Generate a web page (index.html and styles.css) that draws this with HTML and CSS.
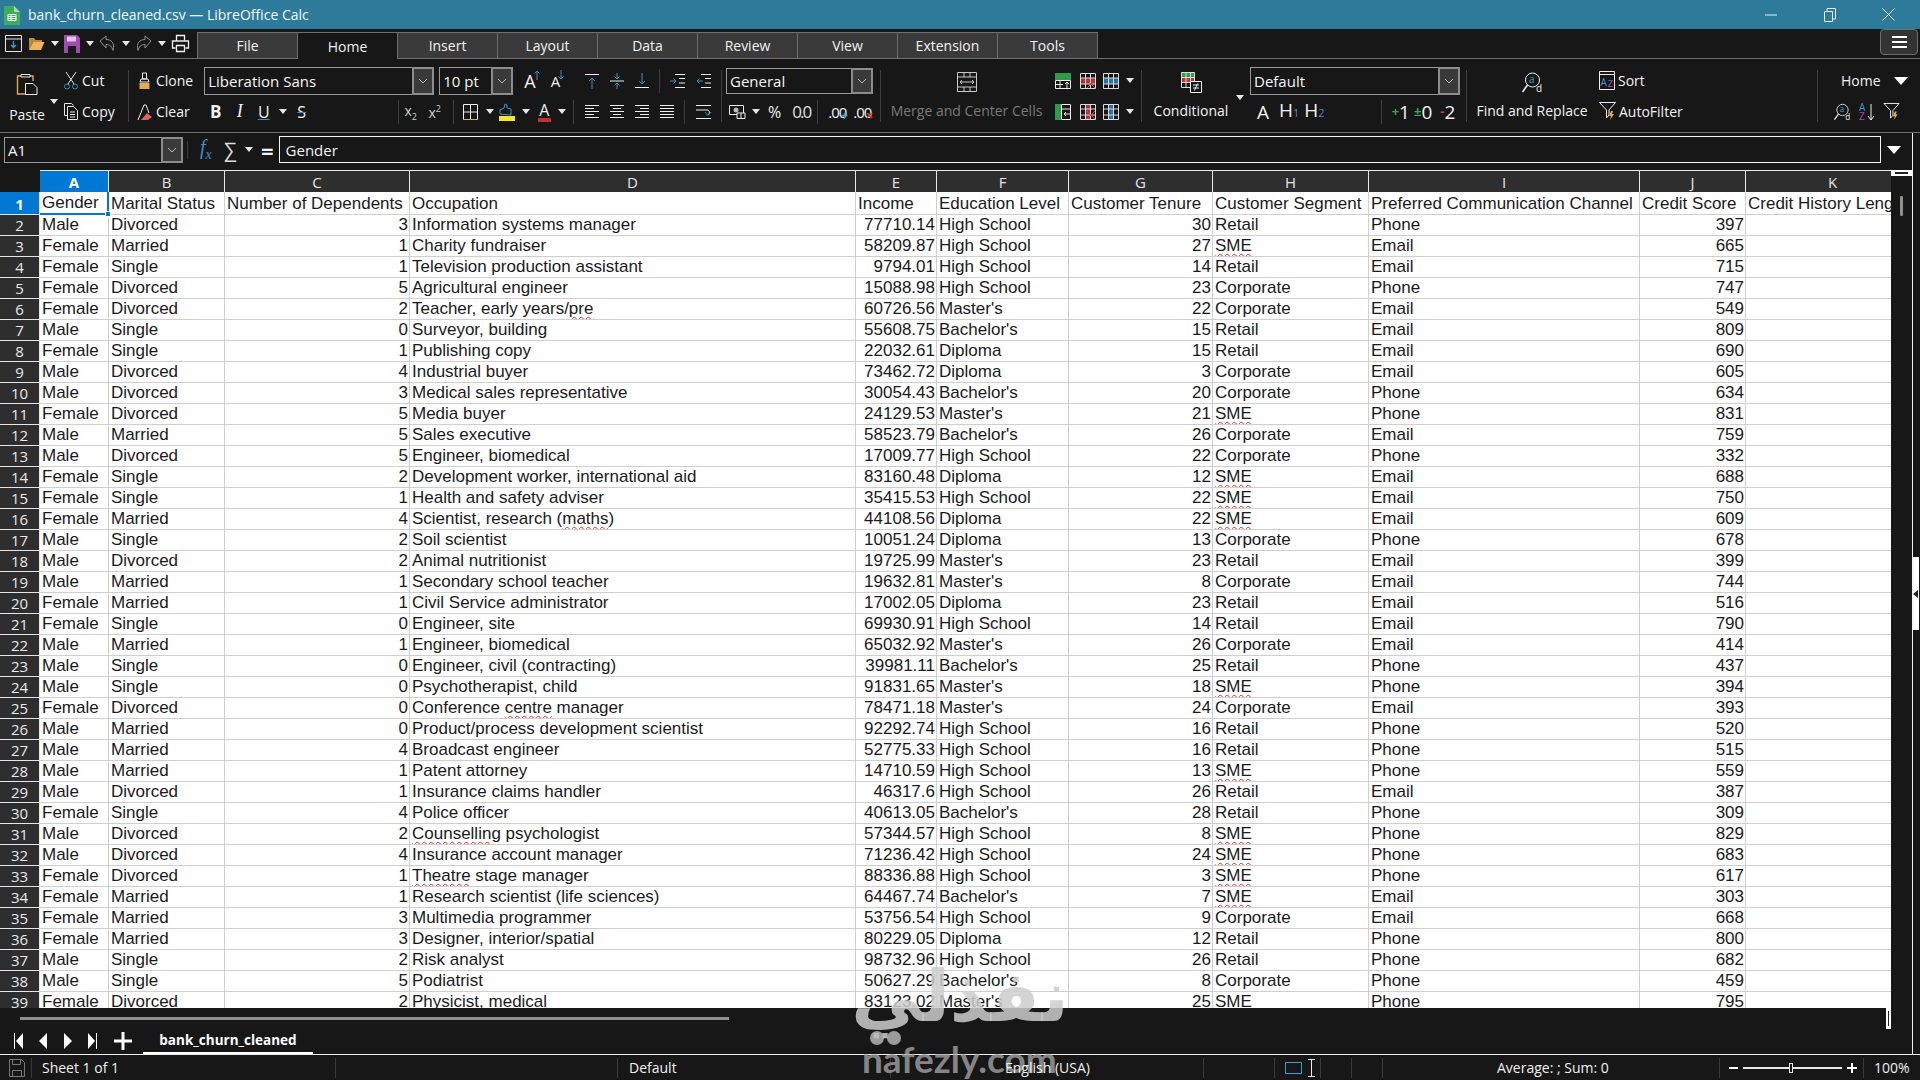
FILE: index.html
```html
<!DOCTYPE html>
<html>
<head>
	<meta charset="utf-8">
	<title>bank_churn_cleaned.csv — LibreOffice Calc</title>
	<link rel="stylesheet" href="styles.css">
</head>
<body>
<div class="app">

	<!-- title bar -->
	<div class="titlebar">
		<svg class="doc-icon" width="16" height="20" viewBox="0 0 16 20"><path d="M0 1h10l6 6v13H0z" fill="#3fae5a"/><path d="M10 1l6 6h-6z" fill="#a6dcb3"/><path d="M4 9.5h8v6H4zM4 11.5h8M4 13.5h8M7 9.5v6" fill="none" stroke="#fff"/></svg>
		<span class="title-text">bank_churn_cleaned.csv — LibreOffice Calc</span>
		<div class="win-btns">
			<div class="win-btn"><svg width="12" height="12" viewBox="0 0 12 12"><path d="M0 6h12" stroke="#e8eef2"/></svg></div>
			<div class="win-btn"><svg width="12" height="14" viewBox="0 0 12 14"><path d="M.5 3.5h8v10h-8zM3 3V.5h8.500V11H9" fill="none" stroke="#e8eef2"/></svg></div>
			<div class="win-btn"><svg width="13" height="13" viewBox="0 0 13 13"><path d="M.5.500l12 12M12.500.500l-12 12" stroke="#e8eef2"/></svg></div>
		</div>
	</div>

	<!-- quick toolbar + tabs -->
	<div class="tabbar">
		<div class="quick">
			<svg width="17" height="17" viewBox="0 0 17 17"><path d="M.5.500h16v16H.5zM.5 4h16" fill="none" stroke="#e6e6e6"/><path d="M8.500 6v6M6 10l2.500 2.500L11 10" fill="none" stroke="#3d9bd6" stroke-width="1.300"/></svg>
			<svg class="ml6" width="17" height="17" viewBox="0 0 17 17"><path d="M1 15V3h5l1.500 2H14v2H5L1 15z" fill="#b98a3e"/><path d="M1 15l4-8h11.500l-3.500 8z" fill="#f2b45a"/></svg>
			<i class="dd ml3"></i>
			<svg class="ml2" width="16" height="18" viewBox="0 0 16 18"><path d="M0 0h13l3 3v15H0z" fill="#a04bb0"/><path d="M3 1.500h9v5H3z" fill="#e4c3ea"/><path d="M4 11h8v7H4z" fill="#1a1a1a"/></svg>
			<i class="dd ml3"></i>
			<svg class="ml2" width="17" height="17" viewBox="0 0 17 17"><path d="M1 6l6-5v3.500c5 0 9 3 7 11-1-4-3-6-7-6V13z" fill="none" stroke="#8f8f8f"/></svg>
			<i class="dd ml3"></i>
			<svg class="ml2" width="17" height="17" viewBox="0 0 17 17"><path d="M16 6l-6-5v3.500c-5 0-9 3-7 11 1-4 3-6 7-6V13z" fill="none" stroke="#8f8f8f"/></svg>
			<i class="dd ml3"></i>
			<svg class="ml3" width="17" height="17" viewBox="0 0 17 17"><path d="M4.500 6V.5h8V6M3.500 13H.5V6h16v7h-3M4.500 10.500h8v6h-8z" fill="none" stroke="#f0f0f0" stroke-width="1.300"/></svg>
		</div>
		<div class="tabs">
			<div class="tab">File</div>
			<div class="tab tab-on">Home</div>
			<div class="tab">Insert</div>
			<div class="tab">Layout</div>
			<div class="tab">Data</div>
			<div class="tab">Review</div>
			<div class="tab">View</div>
			<div class="tab">Extension</div>
			<div class="tab">Tools</div>
		</div>
		<div class="menu-btn"><span></span><span></span><span></span></div>
	</div>

	<!-- ribbon -->
	<div class="ribbon">
		<div class="grp grp-clip">
			<div class="paste">
				<svg width="22" height="22" viewBox="0 0 22 22"><path d="M5 3H1.500v18H9M14 3h3v5" fill="none" stroke="#e9a94f" stroke-width="1.400"/><path d="M5 4V1.500h9V4z" fill="none" stroke="#e8e8e8"/><path d="M9.500 10.500H17l4 4v7H9.500z" fill="#171717" stroke="#f0f0f0"/></svg>
				<span class="lbl">Paste</span>
				<i class="dd paste-dd"></i>
			</div>
			<div class="clip-col">
				<div class="row">
					<svg width="14" height="18" viewBox="0 0 14 18"><path d="M2 0l8 12M12 0L4 12" stroke="#e8e8e8" fill="none"/><circle cx="3" cy="14.500" r="2.500" fill="none" stroke="#3d8fc9"/><circle cx="11" cy="14.500" r="2.500" fill="none" stroke="#3d8fc9"/></svg>
					<span class="lbl ml4">Cut</span>
				</div>
				<div class="row">
					<svg width="14" height="17" viewBox="0 0 14 17"><path d="M3 12.500H.5V.5h7l2 2M3.500 3.500h6l4 4v9h-10zM6 9h5M6 11.500h5M6 14h5" fill="none" stroke="#e8e8e8"/></svg>
					<span class="lbl ml4">Copy</span>
				</div>
			</div>
		</div>
		<div class="grp grp-font">
			<div class="row">
				<svg class="ml9" width="13" height="18" viewBox="0 0 13 18"><path d="M4.500 7V1h4v6zM3 7h7l1 3H2z" fill="none" stroke="#eee"/><path d="M1.500 11h10v6h-10z" fill="#e9a94f"/></svg>
				<span class="lbl ml5">Clone</span>
				<div class="combo combo-font ml11">Liberation Sans<b class="combo-btn"><svg width="10" height="6" viewBox="0 0 10 6"><path d="M1 1l4 4 4-4" fill="none" stroke="#bbb"/></svg></b></div>
				<div class="combo combo-size ml5">10 pt<b class="combo-btn"><svg width="10" height="6" viewBox="0 0 10 6"><path d="M1 1l4 4 4-4" fill="none" stroke="#bbb"/></svg></b></div>
				<span class="big-a ml11">A<svg width="6" height="10" viewBox="0 0 6 10"><path d="M3 10V1M.5 3.500L3 1l2.500 2.500" fill="none" stroke="#3d8fc9"/></svg></span>
				<span class="small-a ml11">A<svg width="6" height="10" viewBox="0 0 6 10"><path d="M3 0v9M.5 6.500L3 9l2.500-2.500" fill="none" stroke="#3d8fc9"/></svg></span>
			</div>
			<div class="row">
				<svg class="ml8" width="16" height="18" viewBox="0 0 16 18"><path d="M1 17L7 2h2l3 8" fill="none" stroke="#eee"/><path d="M4 17l6-7 5 4-4 3z" fill="#e0606a"/></svg>
				<span class="lbl ml3">Clear</span>
				<span class="tb tb-b ml14">B</span>
				<span class="tb tb-i">I</span>
				<span class="tb tb-u">U</span>
				<i class="dd"></i>
				<span class="tb tb-s">S</span>
				<b class="vs ml84"></b>
				<span class="tb tb-x">x<sub>2</sub></span>
				<span class="tb tb-x">x<sup>2</sup></span>
				<b class="vs ml6"></b>
				<svg class="ml9" width="15" height="16" viewBox="0 0 15 16"><path d="M.5.500h14v15H.5zM7.500.5v15M.5 8h14" fill="none" stroke="#eee"/><path d="M.5 15.500h14" stroke="#e9a94f"/></svg>
				<i class="dd ml5"></i>
				<svg class="ml2" width="16" height="18" viewBox="0 0 16 18"><path d="M1 11V7l4-2 1-4 2 1v3l4 1v6z" fill="none" stroke="#3d8fc9"/><path d="M0 13h16v5H0z" fill="#f5e532"/></svg>
				<i class="dd ml4"></i>
				<span class="font-color ml5">A</span>
				<i class="dd ml4"></i>
				<b class="vs ml4"></b>
			</div>
		</div>
		<div class="grp grp-align">
			<div class="row">
				<svg width="14" height="16" viewBox="0 0 14 16"><path d="M0 1.500h14" stroke="#eee"/><path d="M7 16V5M4 8l3-3 3 3" fill="none" stroke="#3d8fc9"/></svg>
				<svg class="ml11" width="14" height="16" viewBox="0 0 14 16"><path d="M0 8h14" stroke="#eee"/><path d="M7 0v6M4.500 3.500L7 6l2.500-2.500M7 16v-6M4.500 12.500L7 10l2.500 2.500" fill="none" stroke="#3d8fc9"/></svg>
				<svg class="ml11" width="14" height="16" viewBox="0 0 14 16"><path d="M0 14.500h14" stroke="#eee"/><path d="M7 0v11M4 8l3 3 3-3" fill="none" stroke="#3d8fc9"/></svg>
				<b class="vs ml10"></b>
				<svg class="ml10" width="15" height="14" viewBox="0 0 15 14"><path d="M5 .5h10M9 4.500h6M9 9h6M5 13.500h10" stroke="#eee"/><path d="M0 7h6M3.500 4.500L6 7 3.500 9.500" fill="none" stroke="#3d8fc9"/></svg>
				<svg class="ml11" width="15" height="14" viewBox="0 0 15 14"><path d="M5 .5h10M9 4.500h6M9 9h6M5 13.500h10" stroke="#eee"/><path d="M7 7H1M3.500 4.500L1 7l2.500 2.500" fill="none" stroke="#3d8fc9"/></svg>
			</div>
			<div class="row">
				<svg width="14" height="14" viewBox="0 0 14 14"><path d="M0 .5h14M0 3.500h9M0 6.500h14M0 9.500h9M0 12.500h14" stroke="#eee"/></svg>
				<svg class="ml11" width="14" height="14" viewBox="0 0 14 14"><path d="M0 .5h14M3 3.500h8M0 6.500h14M3 9.500h8M0 12.500h14" stroke="#eee"/></svg>
				<svg class="ml11" width="14" height="14" viewBox="0 0 14 14"><path d="M0 .5h14M5 3.500h9M0 6.500h14M5 9.500h9M0 12.500h14" stroke="#eee"/></svg>
				<svg class="ml11" width="14" height="14" viewBox="0 0 14 14"><path d="M0 .5h14M0 3.500h14M0 6.500h14M0 9.500h14M0 12.500h14" stroke="#eee"/></svg>
				<b class="vs ml10"></b>
				<svg class="ml11" width="15" height="14" viewBox="0 0 15 14"><path d="M0 .5h15M0 13.500h15M0 5h11c3 0 3 4 1 5" fill="none" stroke="#eee"/><path d="M9 7l3 3.500L15 7" fill="none" stroke="#3d8fc9"/></svg>
			</div>
		</div>
		<b class="vs vs-tall"></b>
		<div class="grp grp-num">
			<div class="row"><div class="combo combo-num ml4">General<b class="combo-btn"><svg width="10" height="6" viewBox="0 0 10 6"><path d="M1 1l4 4 4-4" fill="none" stroke="#bbb"/></svg></b></div></div>
			<div class="row">
				<svg class="ml7" width="17" height="14" viewBox="0 0 17 14"><path d="M.5.500h14v9H.5z" fill="none" stroke="#eee"/><circle cx="7" cy="5" r="2.500" fill="#bbb"/><path d="M8 8h8v5.500H8z" fill="#171717" stroke="#eee"/><path d="M12 8v6" stroke="#eee"/></svg>
				<i class="dd ml3"></i>
				<span class="tb-pct ml5">%</span>
				<span class="tb-num ml11">0.0</span>
				<b class="vs ml9"></b>
				<span class="tb-dec ml10">.00<em class="dec-add">+</em></span>
				<span class="tb-dec ml9">.00<em class="dec-del">×</em></span>
			</div>
		</div>
		<b class="vs vs-tall"></b>
		<div class="grp grp-merge">
			<div class="merge-col">
				<svg width="20" height="20" viewBox="0 0 20 20"><path d="M.5.500h19v19H.5zM.5 5h19M.5 15h19M7 .5V5M13 .5V5M7 15v4.500M13 15v4.500M3 10h14M3 10l2-2M3 10l2 2M17 10l-2-2M17 10l-2 2" fill="none" stroke="#c9c9c9"/></svg>
				<span class="lbl lbl-off">Merge and Center Cells</span>
			</div>
			<div class="cell-ops">
				<div class="row">
					<svg width="16" height="16" viewBox="0 0 16 16"><path d="M0 0h16v7H0z" fill="#2f9a4a"/><path d="M.5 7.500h15v8H.5zM5 7.500v8M.5 11.500H8" fill="none" stroke="#eee"/><path d="M12 15V9M10 11l2-2 2 2" fill="none" stroke="#eee"/></svg>
					<svg class="ml9" width="16" height="16" viewBox="0 0 16 16"><path d="M0 5h16v6H0z" fill="#a93232"/><path d="M.5.500h15v15H.5zM5.500.5v15M10.500.5v15M.5 5h15M.5 11h15" fill="none" stroke="#ddd"/><path d="M7 7l8 8M15 7l-8 8" stroke="#e04040"/></svg>
					<svg class="ml7" width="16" height="16" viewBox="0 0 16 16"><path d="M0 5h16v6H0z" fill="#2a6fa8"/><path d="M.5.500h15v15H.5zM5.500.5v15M10.500.5v15M.5 5h15M.5 11h15" fill="none" stroke="#ddd"/></svg>
					<i class="dd ml4"></i>
				</div>
				<div class="row">
					<svg width="16" height="16" viewBox="0 0 16 16"><path d="M0 0h6v16H0z" fill="#2f9a4a"/><path d="M6.500.5h9v15h-9zM6.500 5h9" fill="none" stroke="#eee"/><path d="M15 10H9M11 8l-2 2 2 2" fill="none" stroke="#eee"/></svg>
					<svg class="ml9" width="16" height="16" viewBox="0 0 16 16"><path d="M5 0h6v16H5z" fill="#a93232"/><path d="M.5.500h15v15H.5zM5.500.5v15M10.500.5v15M.5 5h15M.5 11h15" fill="none" stroke="#ddd"/><path d="M7 7l8 8M15 7l-8 8" stroke="#e04040"/></svg>
					<svg class="ml7" width="16" height="16" viewBox="0 0 16 16"><path d="M5 0h6v16H5z" fill="#2a6fa8"/><path d="M.5.500h15v15H.5zM5.500.5v15M10.500.5v15M.5 5h15M.5 11h15" fill="none" stroke="#ddd"/></svg>
					<i class="dd ml4"></i>
				</div>
			</div>
		</div>
		<b class="vs vs-tall"></b>
		<div class="grp grp-style">
			<div class="cond">
				<svg width="21" height="21" viewBox="0 0 21 21"><path d="M0 0h14v5H0z" fill="#2f9a4a"/><path d="M0 5h14v5H0z" fill="#c0392b"/><path d="M.5.500h13v15H.5zM5 .5v15M9.500.5v15M.5 5.500h13M.5 10.500h13" fill="none" stroke="#ddd"/><path d="M9.500 9.500h11v11h-11z" fill="#171717" stroke="#eee"/><path d="M12 13h6M12 16h6M16.500 11.500l-3 7" fill="none" stroke="#eee"/></svg>
				<span class="lbl">Conditional</span>
				<i class="dd cond-dd"></i>
			</div>
			<div class="style-col">
				<div class="row"><div class="combo combo-style">Default<b class="combo-btn"><svg width="10" height="6" viewBox="0 0 10 6"><path d="M1 1l4 4 4-4" fill="none" stroke="#bbb"/></svg></b></div></div>
				<div class="row">
					<span class="hd ml7">A</span>
					<span class="hd ml10">H<em>1</em></span>
					<span class="hd ml5">H<em>2</em></span>
					<b class="vs ml56"></b>
					<span class="hd ml10"><u class="c-green">+</u>1</span>
					<span class="hd ml4"><u class="c-mix">±</u>0</span>
					<span class="hd ml8"><u class="c-red">-</u>2</span>
				</div>
			</div>
		</div>
		<b class="vs vs-tall"></b>
		<div class="grp grp-find">
			<div class="find-col">
				<svg width="21" height="21" viewBox="0 0 21 21"><circle cx="10.500" cy="8" r="7" fill="none" stroke="#eee"/><path d="M5.500 13L.5 20" stroke="#eee" stroke-width="1.500"/><text x="7" y="11" class="ico-a">a</text><text x="14" y="20" class="ico-d">d</text></svg>
				<span class="lbl">Find and Replace</span>
			</div>
			<div class="sort-col">
				<div class="row">
					<svg width="16" height="19" viewBox="0 0 16 19"><path d="M.5.500h15v18H.5zM.5 3.500h15" fill="none" stroke="#eee"/><text x="1.500" y="15" class="ico-az1">A</text><text x="8.500" y="16" class="ico-az2">z</text></svg>
					<span class="lbl ml3">Sort</span>
				</div>
				<div class="row">
					<svg width="17" height="19" viewBox="0 0 17 19"><path d="M.5.500h16L10 8v5L7.500 16V8z" fill="none" stroke="#eee"/><path d="M12 9l-2 5h2l-1 4 4-6h-2l1-3z" fill="#e9a94f"/></svg>
					<span class="lbl ml3">AutoFilter</span>
				</div>
			</div>
		</div>
		<b class="vs vs-tall"></b>
		<div class="grp grp-home">
			<div class="row"><span class="lbl ml23">Home</span><i class="dd-big"></i></div>
			<div class="row">
				<svg class="ml16" width="17" height="18" viewBox="0 0 21 21"><circle cx="10.500" cy="8" r="7" fill="none" stroke="#eee"/><path d="M5.500 13L.5 20" stroke="#eee" stroke-width="1.500"/><text x="7" y="11" class="ico-a">a</text><text x="14" y="20" class="ico-d">d</text></svg>
				<svg class="ml8" width="17" height="18" viewBox="0 0 17 18"><text x="0" y="8" class="ico-az3">A</text><text x="0" y="17" class="ico-az4">Z</text><path d="M12 1v16M9 13l3 4 3-4" fill="none" stroke="#eee"/></svg>
				<svg class="ml7" width="17" height="18" viewBox="0 0 17 19"><path d="M.5.500h16L10 8v5L7.500 16V8z" fill="none" stroke="#eee"/><path d="M12 9l-2 5h2l-1 4 4-6h-2l1-3z" fill="#e9a94f"/></svg>
			</div>
		</div>
	</div>

	<div class="work">
		<div class="main">

			<!-- formula bar -->
			<div class="formula">
				<div class="combo combo-name">A1<b class="combo-btn"><svg width="10" height="6" viewBox="0 0 10 6"><path d="M1 1l4 4 4-4" fill="none" stroke="#bbb"/></svg></b></div>
				<b class="vs-short"></b>
				<span class="fx">f<sub>x</sub></span>
				<span class="sigma">∑</span>
				<i class="dd"></i>
				<span class="equal">=</span>
				<div class="f-input">Gender</div>
				<i class="dd-big"></i>
			</div>

			<div class="sheet-wrap">
				<div class="sheet">
					<table class="grid">
						<colgroup><col class="w40"><col class="w69"><col class="w116"><col class="w185"><col class="w446"><col class="w81"><col class="w132"><col class="w144"><col class="w156"><col class="w271"><col class="w106"><col class="w174"></colgroup>
						<thead>
							<tr><th class="corner"></th><th class="on">A</th><th>B</th><th>C</th><th>D</th><th>E</th><th>F</th><th>G</th><th>H</th><th>I</th><th>J</th><th>K</th></tr>
						</thead>
						<tbody>
							<tr class="first"><th class="on">1</th><td class="cur">Gender<i class="handle"></i></td><td>Marital Status</td><td>Number of Dependents</td><td>Occupation</td><td>Income</td><td>Education Level</td><td>Customer Tenure</td><td>Customer Segment</td><td>Preferred Communication Channel</td><td>Credit Score</td><td>Credit History Length</td></tr>
							<tr><th>2</th><td>Male</td><td>Divorced</td><td class="n">3</td><td>Information systems manager</td><td class="n">77710.14</td><td>High School</td><td class="n">30</td><td>Retail</td><td>Phone</td><td class="n">397</td><td></td></tr>
							<tr><th>3</th><td>Female</td><td>Married</td><td class="n">1</td><td>Charity fundraiser</td><td class="n">58209.87</td><td>High School</td><td class="n">27</td><td><span class="sp">SME</span></td><td>Email</td><td class="n">665</td><td></td></tr>
							<tr><th>4</th><td>Female</td><td>Single</td><td class="n">1</td><td>Television production assistant</td><td class="n">9794.01</td><td>High School</td><td class="n">14</td><td>Retail</td><td>Email</td><td class="n">715</td><td></td></tr>
							<tr><th>5</th><td>Female</td><td>Divorced</td><td class="n">5</td><td>Agricultural engineer</td><td class="n">15088.98</td><td>High School</td><td class="n">23</td><td>Corporate</td><td>Phone</td><td class="n">747</td><td></td></tr>
							<tr><th>6</th><td>Female</td><td>Divorced</td><td class="n">2</td><td>Teacher, early years/<span class="sp">pre</span></td><td class="n">60726.56</td><td>Master's</td><td class="n">22</td><td>Corporate</td><td>Email</td><td class="n">549</td><td></td></tr>
							<tr><th>7</th><td>Male</td><td>Single</td><td class="n">0</td><td>Surveyor, building</td><td class="n">55608.75</td><td>Bachelor's</td><td class="n">15</td><td>Retail</td><td>Email</td><td class="n">809</td><td></td></tr>
							<tr><th>8</th><td>Female</td><td>Single</td><td class="n">1</td><td>Publishing copy</td><td class="n">22032.61</td><td>Diploma</td><td class="n">15</td><td>Retail</td><td>Email</td><td class="n">690</td><td></td></tr>
							<tr><th>9</th><td>Male</td><td>Divorced</td><td class="n">4</td><td>Industrial buyer</td><td class="n">73462.72</td><td>Diploma</td><td class="n">3</td><td>Corporate</td><td>Email</td><td class="n">605</td><td></td></tr>
							<tr><th>10</th><td>Male</td><td>Divorced</td><td class="n">3</td><td>Medical sales representative</td><td class="n">30054.43</td><td>Bachelor's</td><td class="n">20</td><td>Corporate</td><td>Phone</td><td class="n">634</td><td></td></tr>
							<tr><th>11</th><td>Female</td><td>Divorced</td><td class="n">5</td><td>Media buyer</td><td class="n">24129.53</td><td>Master's</td><td class="n">21</td><td><span class="sp">SME</span></td><td>Phone</td><td class="n">831</td><td></td></tr>
							<tr><th>12</th><td>Male</td><td>Married</td><td class="n">5</td><td>Sales executive</td><td class="n">58523.79</td><td>Bachelor's</td><td class="n">26</td><td>Corporate</td><td>Email</td><td class="n">759</td><td></td></tr>
							<tr><th>13</th><td>Male</td><td>Divorced</td><td class="n">5</td><td>Engineer, biomedical</td><td class="n">17009.77</td><td>High School</td><td class="n">22</td><td>Corporate</td><td>Phone</td><td class="n">332</td><td></td></tr>
							<tr><th>14</th><td>Female</td><td>Single</td><td class="n">2</td><td>Development worker, international aid</td><td class="n">83160.48</td><td>Diploma</td><td class="n">12</td><td><span class="sp">SME</span></td><td>Email</td><td class="n">688</td><td></td></tr>
							<tr><th>15</th><td>Female</td><td>Single</td><td class="n">1</td><td>Health and safety adviser</td><td class="n">35415.53</td><td>High School</td><td class="n">22</td><td><span class="sp">SME</span></td><td>Email</td><td class="n">750</td><td></td></tr>
							<tr><th>16</th><td>Female</td><td>Married</td><td class="n">4</td><td>Scientist, research (<span class="sp">maths</span>)</td><td class="n">44108.56</td><td>Diploma</td><td class="n">22</td><td><span class="sp">SME</span></td><td>Email</td><td class="n">609</td><td></td></tr>
							<tr><th>17</th><td>Male</td><td>Single</td><td class="n">2</td><td>Soil scientist</td><td class="n">10051.24</td><td>Diploma</td><td class="n">13</td><td>Corporate</td><td>Phone</td><td class="n">678</td><td></td></tr>
							<tr><th>18</th><td>Male</td><td>Divorced</td><td class="n">2</td><td>Animal nutritionist</td><td class="n">19725.99</td><td>Master's</td><td class="n">23</td><td>Retail</td><td>Email</td><td class="n">399</td><td></td></tr>
							<tr><th>19</th><td>Male</td><td>Married</td><td class="n">1</td><td>Secondary school teacher</td><td class="n">19632.81</td><td>Master's</td><td class="n">8</td><td>Corporate</td><td>Email</td><td class="n">744</td><td></td></tr>
							<tr><th>20</th><td>Female</td><td>Married</td><td class="n">1</td><td>Civil Service administrator</td><td class="n">17002.05</td><td>Diploma</td><td class="n">23</td><td>Retail</td><td>Email</td><td class="n">516</td><td></td></tr>
							<tr><th>21</th><td>Female</td><td>Single</td><td class="n">0</td><td>Engineer, site</td><td class="n">69930.91</td><td>High School</td><td class="n">14</td><td>Retail</td><td>Email</td><td class="n">790</td><td></td></tr>
							<tr><th>22</th><td>Male</td><td>Married</td><td class="n">1</td><td>Engineer, biomedical</td><td class="n">65032.92</td><td>Master's</td><td class="n">26</td><td>Corporate</td><td>Email</td><td class="n">414</td><td></td></tr>
							<tr><th>23</th><td>Male</td><td>Single</td><td class="n">0</td><td>Engineer, civil (contracting)</td><td class="n">39981.11</td><td>Bachelor's</td><td class="n">25</td><td>Retail</td><td>Phone</td><td class="n">437</td><td></td></tr>
							<tr><th>24</th><td>Male</td><td>Single</td><td class="n">0</td><td>Psychotherapist, child</td><td class="n">91831.65</td><td>Master's</td><td class="n">18</td><td><span class="sp">SME</span></td><td>Phone</td><td class="n">394</td><td></td></tr>
							<tr><th>25</th><td>Female</td><td>Divorced</td><td class="n">0</td><td>Conference <span class="sp">centre</span> manager</td><td class="n">78471.18</td><td>Master's</td><td class="n">24</td><td>Corporate</td><td>Email</td><td class="n">393</td><td></td></tr>
							<tr><th>26</th><td>Male</td><td>Married</td><td class="n">0</td><td>Product/process development scientist</td><td class="n">92292.74</td><td>High School</td><td class="n">16</td><td>Retail</td><td>Phone</td><td class="n">520</td><td></td></tr>
							<tr><th>27</th><td>Male</td><td>Married</td><td class="n">4</td><td>Broadcast engineer</td><td class="n">52775.33</td><td>High School</td><td class="n">16</td><td>Retail</td><td>Phone</td><td class="n">515</td><td></td></tr>
							<tr><th>28</th><td>Male</td><td>Married</td><td class="n">1</td><td>Patent attorney</td><td class="n">14710.59</td><td>High School</td><td class="n">13</td><td><span class="sp">SME</span></td><td>Phone</td><td class="n">559</td><td></td></tr>
							<tr><th>29</th><td>Male</td><td>Divorced</td><td class="n">1</td><td>Insurance claims handler</td><td class="n">46317.6</td><td>High School</td><td class="n">26</td><td>Retail</td><td>Email</td><td class="n">387</td><td></td></tr>
							<tr><th>30</th><td>Female</td><td>Single</td><td class="n">4</td><td>Police officer</td><td class="n">40613.05</td><td>Bachelor's</td><td class="n">28</td><td>Retail</td><td>Phone</td><td class="n">309</td><td></td></tr>
							<tr><th>31</th><td>Male</td><td>Divorced</td><td class="n">2</td><td><span class="sp">Counselling</span> psychologist</td><td class="n">57344.57</td><td>High School</td><td class="n">8</td><td><span class="sp">SME</span></td><td>Phone</td><td class="n">829</td><td></td></tr>
							<tr><th>32</th><td>Male</td><td>Divorced</td><td class="n">4</td><td>Insurance account manager</td><td class="n">71236.42</td><td>High School</td><td class="n">24</td><td><span class="sp">SME</span></td><td>Phone</td><td class="n">683</td><td></td></tr>
							<tr><th>33</th><td>Female</td><td>Divorced</td><td class="n">1</td><td><span class="sp">Theatre</span> stage manager</td><td class="n">88336.88</td><td>High School</td><td class="n">3</td><td><span class="sp">SME</span></td><td>Phone</td><td class="n">617</td><td></td></tr>
							<tr><th>34</th><td>Female</td><td>Married</td><td class="n">1</td><td>Research scientist (life sciences)</td><td class="n">64467.74</td><td>Bachelor's</td><td class="n">7</td><td><span class="sp">SME</span></td><td>Email</td><td class="n">303</td><td></td></tr>
							<tr><th>35</th><td>Female</td><td>Married</td><td class="n">3</td><td>Multimedia programmer</td><td class="n">53756.54</td><td>High School</td><td class="n">9</td><td>Corporate</td><td>Email</td><td class="n">668</td><td></td></tr>
							<tr><th>36</th><td>Female</td><td>Married</td><td class="n">3</td><td>Designer, interior/spatial</td><td class="n">80229.05</td><td>Diploma</td><td class="n">12</td><td>Retail</td><td>Phone</td><td class="n">800</td><td></td></tr>
							<tr><th>37</th><td>Male</td><td>Single</td><td class="n">2</td><td>Risk analyst</td><td class="n">98732.96</td><td>High School</td><td class="n">26</td><td>Retail</td><td>Phone</td><td class="n">682</td><td></td></tr>
							<tr><th>38</th><td>Male</td><td>Single</td><td class="n">5</td><td>Podiatrist</td><td class="n">50627.29</td><td>Bachelor's</td><td class="n">8</td><td>Corporate</td><td>Phone</td><td class="n">459</td><td></td></tr>
							<tr><th>39</th><td>Female</td><td>Divorced</td><td class="n">2</td><td>Physicist, medical</td><td class="n">83123.02</td><td>Master's</td><td class="n">25</td><td><span class="sp">SME</span></td><td>Phone</td><td class="n">795</td><td></td></tr>
						</tbody>
					</table>
				</div>
				<div class="vscroll">
					<div class="vscroll-top"></div>
					<div class="vscroll-thumb"></div>
				</div>
			</div>

			<!-- sheet tabs -->
			<div class="bottom">
				<div class="hscroll"></div>
				<div class="split-handle"></div>
				<div class="sheet-nav">
					<svg width="9" height="16" viewBox="0 0 9 16"><path d="M.5 0v16" stroke="#fff"/><path d="M9 0v16L2 8z" fill="#fff"/></svg>
					<svg class="ml16" width="8" height="16" viewBox="0 0 8 16"><path d="M8 0v16L0 8z" fill="#fff"/></svg>
					<svg class="ml17" width="8" height="16" viewBox="0 0 8 16"><path d="M0 0v16l8-8z" fill="#fff"/></svg>
					<svg class="ml16" width="9" height="16" viewBox="0 0 9 16"><path d="M8.500 0v16" stroke="#fff"/><path d="M0 0v16l7-8z" fill="#fff"/></svg>
					<svg class="ml17" width="18" height="18" viewBox="0 0 18 18"><path d="M9 0v18M0 9h18" stroke="#fff" stroke-width="3"/></svg>
					<div class="sheet-tab">bank_churn_cleaned</div>
				</div>
			</div>
		</div>
		<div class="rail">
			<div class="rail-grip"><i class="grip-arrow"></i></div>
		</div>
	</div>

	<!-- status bar -->
	<div class="status">
		<div class="st st-save"><svg width="16" height="18" viewBox="0 0 16 18"><path d="M.5.500h12l3 3v14H.5zM3.500.5v5h8v-5M3.500 17.500v-6h9v6" fill="none" stroke="#777"/></svg></div>
		<div class="st st-sheet">Sheet 1 of 1</div>
		<div class="st st-blank"></div>
		<div class="st st-style">Default</div>
		<div class="st st-lang"><span class="lang-text">English (USA)</span></div>
		<div class="st st-ins"></div>
		<div class="st st-sel"><svg width="17" height="12" viewBox="0 0 17 12"><path d="M.5.500h16v11H.5z" fill="none" stroke="#3d9bd6"/></svg><svg class="ml6" width="7" height="18" viewBox="0 0 7 18"><path d="M0 .5h7M0 17.500h7M3.500 .5v17" stroke="#eee"/></svg></div>
		<div class="st st-b1"></div>
		<div class="st st-b1"></div>
		<div class="st st-sum">Average: ; Sum: 0</div>
		<div class="st st-zoom">
			<span class="z-minus"></span>
			<div class="z-track"><span class="z-thumb"></span></div>
			<svg width="10" height="10" viewBox="0 0 10 10"><path d="M5 0v10M0 5h10" stroke="#fff" stroke-width="2"/></svg>
		</div>
		<div class="st st-pct">100%</div>
	</div>

	<!-- site watermark -->
	<div class="mark">
		<div class="mark-ar" lang="ar" dir="rtl">نفذلي</div>
		<div class="mark-dots"><span></span><span></span></div>
		<div class="mark-en">nafezly.com</div>
	</div>
</div>
</body>
</html>
```

FILE: styles.css
```css
* {
	box-sizing: border-box;
}

html, body {
	margin: 0;
	padding: 0;
	background: #171717;
}

svg {
	flex: none;
	overflow: visible;
}

.app {
	position: relative;
	display: flex;
	flex-direction: column;
	width: 1920px;
	height: 1080px;
	overflow: hidden;
	background: #171717;
	color: #f2f2f2;
	font-family: "Open Sans", "Noto Sans", sans-serif;
	font-size: 14px;
}

/* title bar */
.titlebar {
	display: flex;
	align-items: center;
	height: 29px;
	padding-left: 4px;
	background: #2e7a9b;
}

.title-text {
	margin-left: 8px;
	font-size: 14px;
	color: #f4f8fa;
}

.win-btns {
	display: flex;
	margin-left: auto;
	margin-right: 2px;
}

.win-btn {
	display: flex;
	align-items: center;
	justify-content: center;
	width: 59px;
	height: 29px;
}

/* tabs */
.tabbar {
	display: flex;
	align-items: flex-end;
	height: 29px;
}

.quick {
	display: flex;
	align-items: center;
	width: 197px;
	height: 29px;
	padding-left: 5px;
}

.tabs {
	display: flex;
}

.tab {
	display: flex;
	align-items: center;
	justify-content: center;
	width: 101px;
	height: 26px;
	background: #3a3a3a;
	border: 1px solid #6e6e6e;
	border-bottom: 0;
	margin-right: -1px;
	font-size: 14px;
	color: #f2f2f2;
}

.tab-on {
	background: #171717;
	margin-bottom: -1px;
	height: 27px;
	position: relative;
}

.menu-btn {
	display: flex;
	flex-direction: column;
	justify-content: center;
	align-items: center;
	gap: 3px;
	width: 38px;
	height: 26px;
	margin-left: auto;
	margin-right: 2px;
	margin-bottom: 3px;
	background: #333;
	border: 1px solid #6e6e6e;
	border-radius: 4px;
}

.menu-btn span {
	width: 15px;
	height: 2px;
	background: #fff;
}

/* ribbon */
.ribbon {
	display: flex;
	height: 76px;
	padding-top: 6px;
	border-top: 1px solid #6e6e6e;
	border-bottom: 1px solid #6e6e6e;
}

.grp {
	flex: none;
}

.row {
	display: flex;
	align-items: center;
	height: 31px;
}

.lbl {
	font-size: 14px;
	white-space: nowrap;
	color: #f2f2f2;
}

.lbl-off {
	color: #7a7a7a;
}

.vs {
	display: block;
	flex: none;
	width: 1px;
	height: 24px;
	background: #3e3e3e;
}

.vs-tall {
	height: 52px;
	margin-top: 5px;
}

.dd {
	display: flex;
	align-items: center;
	justify-content: center;
	flex: none;
	width: 14px;
}

.dd::before {
	content: "";
	border-left: 4px solid transparent;
	border-right: 4px solid transparent;
	border-top: 5px solid #e8e8e8;
}

.dd-big {
	flex: none;
	margin-left: auto;
	border-left: 7px solid transparent;
	border-right: 7px solid transparent;
	border-top: 8px solid #fff;
}

.ml2 { margin-left: 2px; }
.ml3 { margin-left: 3px; }
.ml4 { margin-left: 4px; }
.ml5 { margin-left: 5px; }
.ml6 { margin-left: 6px; }
.ml7 { margin-left: 7px; }
.ml8 { margin-left: 8px; }
.ml9 { margin-left: 9px; }
.ml10 { margin-left: 10px; }
.ml11 { margin-left: 11px; }
.ml14 { margin-left: 14px; }
.ml16 { margin-left: 16px; }
.ml17 { margin-left: 17px; }
.ml23 { margin-left: 23px; }
.ml56 { margin-left: 56px; }
.ml84 { margin-left: 84px; }

.grp-clip {
	display: flex;
	width: 129px;
	border-right: 1px solid #3e3e3e;
	height: 52px;
	margin-top: 5px;
}

.paste {
	position: relative;
	display: flex;
	flex-direction: column;
	align-items: center;
	width: 64px;
	padding-top: 3px;
	padding-right: 10px;
}

.paste .lbl {
	margin-top: 10px;
}

.paste-dd {
	position: absolute;
	left: 47px;
	top: 29px;
}

.clip-col {
	margin-top: -5px;
}

.grp-font {
	width: 444px;
}

.combo {
	position: relative;
	display: flex;
	align-items: center;
	flex: none;
	height: 28px;
	padding-left: 3px;
	border: 1px solid #9a9a9a;
	font-size: 15px;
	color: #f5f5f5;
}

.combo-btn {
	display: flex;
	align-items: center;
	justify-content: center;
	position: absolute;
	right: -1px;
	top: -1px;
	bottom: -1px;
	width: 22px;
	background: #3a3a3a;
	border: 2px solid #8c8c8c;
}

.combo-font { width: 230px; }
.combo-size { width: 74px; }
.combo-num { width: 147px; height: 26px; }
.combo-style { width: 210px; }

.combo-name {
	width: 179px;
	height: 26px;
	margin-left: 4px;
}

.big-a,
.small-a {
	display: flex;
	align-items: flex-start;
	font-size: 18px;
	line-height: 22px;
}

.small-a {
	font-size: 15px;
}

.big-a svg,
.small-a svg {
	margin-left: -2px;
}

.tb {
	flex: none;
	width: 24px;
	text-align: center;
	font-size: 15px;
}

.tb-b { font-weight: 700; font-size: 17px; }

.tb-i {
	font-family: "Liberation Serif", serif;
	font-style: italic;
	font-size: 18px;
}

.tb-u {
	text-decoration: underline;
	text-decoration-color: #3d8fc9;
	font-size: 16px;
}

.tb-s {
	text-decoration: line-through;
	text-decoration-color: #3d8fc9;
	font-size: 16px;
}

.tb-x {
	font-size: 14px;
	color: #cfcfcf;
}

.tb-x sub,
.tb-x sup {
	font-size: 9px;
}

.font-color {
	flex: none;
	width: 13px;
	height: 20px;
	border-bottom: 4px solid #c03030;
	text-align: center;
	font-size: 16px;
	line-height: 16px;
}

.grp-align {
	width: 148px;
	padding-left: 12px;
}

.grp-num {
	width: 158px;
}

.tb-pct {
	font-size: 16px;
}

.tb-num {
	flex: none;
	width: 16px;
	font-size: 17px;
	color: #e0e0e0;
	letter-spacing: -2px;
	white-space: nowrap;
}

.tb-dec {
	position: relative;
	flex: none;
	width: 16px;
	font-size: 15px;
	letter-spacing: -1px;
	white-space: nowrap;
}

.tb-dec em {
	position: absolute;
	right: -3px;
	bottom: -2px;
	font-style: normal;
	font-weight: 700;
	font-size: 13px;
}

.dec-add { color: #3d9bd6; }
.dec-del { color: #d94040; }

.grp-merge {
	display: flex;
	width: 260px;
}

.merge-col {
	display: flex;
	flex-direction: column;
	align-items: center;
	width: 174px;
	padding-top: 7px;
	padding-right: 3px;
}

.merge-col .lbl {
	margin-top: 9px;
}

.grp-style {
	display: flex;
	width: 324px;
}

.cond {
	position: relative;
	display: flex;
	flex-direction: column;
	align-items: center;
	width: 108px;
	padding-top: 7px;
	padding-right: 10px;
}

.cond .lbl {
	margin-top: 8px;
}

.cond-dd {
	position: absolute;
	left: 91px;
	top: 30px;
}

.hd {
	position: relative;
	font-size: 19px;
	line-height: 24px;
	white-space: nowrap;
}

.hd em {
	font-style: normal;
	font-size: 11px;
	color: #3d8fc9;
}

.hd u {
	text-decoration: none;
	font-size: 13px;
	font-weight: 700;
	vertical-align: 3px;
}

.c-green { color: #34a853; }
.c-mix { color: #34a853; }
.c-red { color: #d94040; }

.grp-find {
	display: flex;
	width: 350px;
}

.find-col {
	display: flex;
	flex-direction: column;
	align-items: center;
	width: 130px;
	padding-top: 7px;
}

.find-col .lbl {
	margin-top: 8px;
}

.sort-col {
	margin-left: 2px;
}

.ico-a {
	font-family: "Open Sans", sans-serif;
	font-size: 10px;
	fill: #3d9bd6;
}

.ico-d {
	font-family: "Open Sans", sans-serif;
	font-size: 10px;
	fill: #eee;
}

.ico-az1 {
	font-family: "Open Sans", sans-serif;
	font-size: 10px;
	fill: #3d9bd6;
}

.ico-az2 {
	font-family: "Open Sans", sans-serif;
	font-size: 12px;
	fill: #a04bb0;
}

.ico-az3 {
	font-family: "Open Sans", sans-serif;
	font-size: 10px;
	fill: #3d9bd6;
}

.ico-az4 {
	font-family: "Open Sans", sans-serif;
	font-size: 10px;
	fill: #a04bb0;
}

.grp-home {
	flex: 1;
	padding-right: 12px;
}

.grp-home .row:first-child .dd-big {
	margin-left: 13px;
}

/* formula bar + sheet */
.work {
	display: flex;
	height: 921px;
}

.main {
	display: flex;
	flex-direction: column;
	width: 1912px;
}

.formula {
	display: flex;
	align-items: center;
	height: 37px;
	padding-top: 3px;
	padding-bottom: 7px;
}

.vs-short {
	width: 1px;
	height: 18px;
	margin-left: 4px;
	background: #3e3e3e;
}

.fx {
	margin-left: 12px;
	width: 24px;
	font-family: "Liberation Serif", serif;
	font-style: italic;
	font-size: 20px;
	color: #3d8fc9;
}

.fx sub {
	font-size: 14px;
}

.sigma {
	font-size: 20px;
	width: 18px;
	color: #dcdcdc;
}

.equal {
	margin-left: 5px;
	font-size: 22px;
	font-weight: 700;
	line-height: 20px;
}

.f-input {
	display: flex;
	align-items: center;
	width: 1602px;
	height: 27px;
	margin-left: 5px;
	padding-left: 6px;
	border: 1px solid #f5f5f5;
	font-size: 15px;
}

.formula .dd-big {
	margin-left: 6px;
}

.sheet-wrap {
	display: flex;
	height: 838px;
}

.sheet {
	position: relative;
	flex: none;
	width: 1891px;
	height: 838px;
	overflow: hidden;
	background: #fff;
}

.grid {
	border-collapse: separate;
	border-spacing: 0;
	table-layout: fixed;
	width: 1920px;
	font-family: "Liberation Sans", Arial, sans-serif;
	font-size: 17px;
	color: #1a1a1a;
}

.w40 { width: 40px; }
.w69 { width: 69px; }
.w116 { width: 116px; }
.w185 { width: 185px; }
.w446 { width: 446px; }
.w81 { width: 81px; }
.w132 { width: 132px; }
.w144 { width: 144px; }
.w156 { width: 156px; }
.w271 { width: 271px; }
.w106 { width: 106px; }
.w174 { width: 174px; }

.grid thead th {
	height: 22px;
	padding: 0;
	background: #2e2e2e;
	border-top: 1px solid #eaeaea;
	border-right: 1px solid #eaeaea;
	font-family: "Open Sans", sans-serif;
	font-weight: 400;
	font-size: 15px;
	line-height: 20px;
	color: #e4e4e4;
}

.grid thead th.corner {
	background: #171717;
	border-top: 0;
	border-right: 0;
}

.grid tbody th {
	height: 21px;
	padding: 0;
	background: #2e2e2e;
	border-bottom: 1px solid #e6e6e6;
	border-right: 1px solid #e6e6e6;
	font-family: "Open Sans", sans-serif;
	font-weight: 400;
	font-size: 15px;
	line-height: 20px;
	color: #e8e8e8;
}

.grid th.on {
	background: #0078d4;
	color: #fff;
	font-weight: 700;
}

.grid td {
	height: 21px;
	padding: 0 1px 0 2px;
	border-right: 1px solid #cfcfcf;
	border-bottom: 1px solid #cfcfcf;
	line-height: 20px;
	white-space: nowrap;
	overflow: hidden;
}

/* first data row is a pixel taller so the grid lines land where Calc draws them */
.grid tbody tr.first th,
.grid tbody tr.first td {
	height: 22px;
	padding-top: 1px;
}

.grid td.n {
	text-align: right;
}

.grid td.cur {
	position: relative;
	overflow: visible;
	border-right: 2px solid #0078d4;
	border-bottom: 2px solid #0078d4;
}

.handle {
	position: absolute;
	right: -4px;
	bottom: -4px;
	width: 6px;
	height: 6px;
	background: #0078d4;
	border: 1px solid #fff;
}

.sp {
	text-decoration: underline wavy #d92b2b 1px;
	text-underline-offset: 2px;
}

.vscroll {
	flex: 1;
	display: flex;
	flex-direction: column;
	align-items: center;
}

.vscroll-top {
	width: 21px;
	height: 6px;
	background: #fff;
	border-top: 2px solid #fff;
	border-bottom: 2px solid #fff;
	position: relative;
}

.vscroll-top::after {
	content: "";
	position: absolute;
	left: 4px;
	right: 4px;
	top: 0;
	height: 2px;
	background: #222;
}

.vscroll-thumb {
	width: 3px;
	height: 20px;
	margin-top: 20px;
	background: #8f8f8f;
	border-radius: 1px;
}

.bottom {
	position: relative;
	flex: 1;
}

.hscroll {
	width: 709px;
	height: 3px;
	margin-top: 9px;
	margin-left: 20px;
	background: #8f8f8f;
}

.split-handle {
	position: absolute;
	left: 1886px;
	top: 0;
	width: 5px;
	height: 21px;
	background: #fff;
	border-left: 2px solid #fff;
	border-right: 2px solid #fff;
}

.split-handle::after {
	content: "";
	display: block;
	width: 1px;
	height: 15px;
	margin-top: 3px;
	background: #222;
}

.sheet-nav {
	display: flex;
	align-items: center;
	height: 30px;
	margin-top: 4px;
	padding-left: 14px;
}

.sheet-nav svg {
	margin-top: 3px;
}

.sheet-tab {
	display: flex;
	align-items: center;
	justify-content: center;
	align-self: stretch;
	width: 170px;
	margin-left: 11px;
	padding-top: 3px;
	border-bottom: 2px solid #fff;
	font-size: 13.5px;
	font-weight: 700;
	color: #fff;
}

/* right rail */
.rail {
	width: 8px;
	border-left: 1px solid #f0f0f0;
}

.rail-grip {
	display: flex;
	align-items: center;
	width: 6px;
	height: 73px;
	margin-top: 424px;
	background: #fff;
}

.grip-arrow {
	border-top: 4px solid transparent;
	border-bottom: 4px solid transparent;
	border-right: 5px solid #222;
}

/* status bar */
.status {
	display: flex;
	align-items: center;
	height: 26px;
	border-top: 1px solid #f0f0f0;
	font-size: 14px;
	color: #f0f0f0;
}

.st {
	display: flex;
	align-items: center;
	flex: none;
	height: 20px;
	border-right: 1px solid #3a3a3a;
	white-space: nowrap;
}

.st-save { width: 32px; padding-left: 9px; }
.st-sheet { width: 304px; padding-left: 10px; }
.st-blank { width: 282px; }
.st-style { width: 273px; padding-left: 11px; }

.st-lang {
	position: relative;
	z-index: 3;
	width: 313px;
	padding-left: 114px;
}

.st-ins { width: 71px; }
.st-sel { width: 46px; padding-left: 10px; }
.st-b1 { width: 31px; }

.st-sum {
	width: 337px;
	padding-left: 114px;
}

.st-zoom {
	width: 144px;
	padding-left: 9px;
}

.z-minus {
	width: 9px;
	height: 2px;
	background: #fff;
}

.z-track {
	position: relative;
	width: 99px;
	height: 2px;
	margin: 0 5px;
	background: #e8e8e8;
}

.z-thumb {
	position: absolute;
	left: 46px;
	top: -4px;
	width: 4px;
	height: 10px;
	background: #171717;
	border: 1px solid #e8e8e8;
}

.st-pct {
	border-right: 0;
	padding-left: 10px;
}

/* watermark */
.mark {
	position: absolute;
	left: 850px;
	top: 960px;
	width: 220px;
	pointer-events: none;
}

.mark-ar {
	height: 71px;
	font-family: "DejaVu Sans", sans-serif;
	font-weight: 700;
	font-size: 71px;
	line-height: 74px;
	text-align: center;
	white-space: nowrap;
	color: rgba(205, 205, 205, 0.85);
}

.mark-dots {
	display: flex;
	gap: 3px;
	height: 16px;
	margin-left: 20px;
}

.mark-dots span {
	width: 14px;
	height: 14px;
	border-radius: 50%;
	background: rgba(190, 190, 190, 0.8);
}

.mark-en {
	margin-left: 12px;
	margin-top: -3px;
	font-family: "Lato", sans-serif;
	font-weight: 700;
	font-size: 37px;
	line-height: 30px;
	white-space: nowrap;
	color: rgba(170, 170, 170, 0.75);
}
```
